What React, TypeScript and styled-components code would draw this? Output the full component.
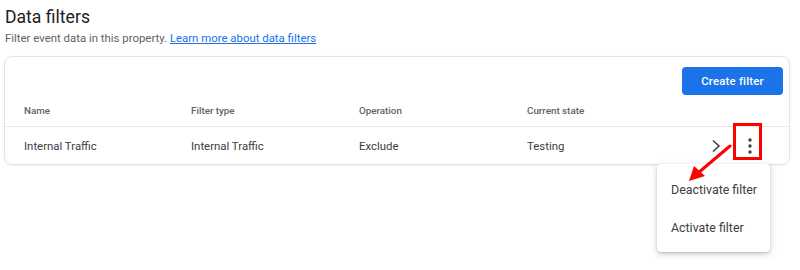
import React from 'react';
import styled, { createGlobalStyle } from 'styled-components';

const GlobalStyle = createGlobalStyle`
  body {
    margin: 0;
    background: #ffffff;
    font-family: Roboto, "Liberation Sans", Arial, sans-serif;
  }
`;

const Page = styled.div`
  width: 800px;
  height: 270px;
  padding: 4px 10px 0 4px;
  box-sizing: border-box;
  position: relative;
`;

const Title = styled.h1`
  margin: 0 0 0 1px;
  font-size: 17.6px;
  line-height: 26px;
  font-weight: 400;
  color: #202124;
`;

const Subtitle = styled.p`
  margin: 0 0 10px 1px;
  font-size: 11.4px;
  line-height: 16px;
  color: #5f6368;

  a {
    color: #1a73e8;
    text-decoration: underline;
  }
`;

const Card = styled.div`
  border: 1px solid #e3e3e3;
  border-radius: 8px;
  box-shadow: 0 1px 2px rgba(60, 64, 67, 0.08);
`;

const Toolbar = styled.div`
  display: flex;
  justify-content: flex-end;
  padding: 10px 6px 0 0;
`;

const PrimaryButton = styled.button`
  height: 28px;
  width: 101px;
  border: none;
  border-radius: 4px;
  background: #1a73e8;
  color: #ffffff;
  font-family: inherit;
  font-size: 11.4px;
  font-weight: 500;
  letter-spacing: 0.2px;
  cursor: pointer;
`;

const Row = styled.div<{ $header?: boolean }>`
  display: grid;
  grid-template-columns: 167px 168px 168px 168px 1fr;
  align-items: center;
  padding-left: 19px;
  height: ${p => (p.$header ? '31px' : '37px')};
  border-bottom: ${p => (p.$header ? '1px solid #e8e8e8' : 'none')};
  font-size: ${p => (p.$header ? '9.8px' : '11.4px')};
  font-weight: ${p => (p.$header ? 500 : 400)};
  color: ${p => (p.$header ? '#5f6368' : '#3c4043')};
`;

const Actions = styled.div`
  display: flex;
  align-items: center;
  padding-left: 13px;
  gap: 18px;
  position: relative;
`;

const IconButton = styled.span`
  display: flex;
  align-items: center;
  justify-content: center;
  width: 16px;
  height: 20px;
  color: #3c4043;
`;

const Highlight = styled.span`
  position: absolute;
  left: 38px;
  top: -13px;
  width: 29px;
  height: 37px;
  box-sizing: border-box;
  border: 3px solid #f00;
`;

const Menu = styled.div`
  position: absolute;
  left: 657px;
  top: 164px;
  width: 113px;
  padding: 6px 0;
  background: #ffffff;
  border-radius: 4px;
  box-shadow: 0 2px 6px rgba(60, 64, 67, 0.25), 0 1px 2px rgba(60, 64, 67, 0.2);
`;

const MenuItem = styled.div`
  padding: 0 14px;
  height: 38px;
  display: flex;
  align-items: center;
  font-size: 12.4px;
  color: #3c4043;
  white-space: nowrap;
`;

const Arrow = styled.svg`
  position: absolute;
  left: 684px;
  top: 142px;
`;

const columns = ['Name', 'Filter type', 'Operation', 'Current state'];

const App: React.FC = () => {
  return (
    <Page>
      <GlobalStyle />
      <Title>Data filters</Title>
      <Subtitle>
        Filter event data in this property. <a href="#">Learn more about data filters</a>
      </Subtitle>

      <Card>
        <Toolbar>
          <PrimaryButton>Create filter</PrimaryButton>
        </Toolbar>
        <Row $header>
          {columns.map(c => (
            <div key={c}>{c}</div>
          ))}
          <div />
        </Row>
        <Row>
          <div>Internal Traffic</div>
          <div>Internal Traffic</div>
          <div>Exclude</div>
          <div>Testing</div>
          <Actions>
            <IconButton>
              <svg width="10" height="14" viewBox="0 0 10 14">
                <path d="M2 1.5 L8 7 L2 12.5" fill="none" stroke="#3c4043" strokeWidth="1.6" />
              </svg>
            </IconButton>
            <IconButton>
              <svg width="6" height="16" viewBox="0 0 6 16">
                <circle cx="3" cy="2" r="1.7" fill="#3c4043" />
                <circle cx="3" cy="8" r="1.7" fill="#3c4043" />
                <circle cx="3" cy="14" r="1.7" fill="#3c4043" />
              </svg>
            </IconButton>
            <Highlight />
          </Actions>
        </Row>
      </Card>

      <Menu>
        <MenuItem>Deactivate filter</MenuItem>
        <MenuItem>Activate filter</MenuItem>
      </Menu>

      <Arrow width="50" height="42" viewBox="0 0 50 42">
        <line x1="46" y1="4" x2="14" y2="31" stroke="#f00" strokeWidth="3" strokeLinecap="round" />
        <polygon points="5,39 10,24 21,34" fill="#f00" />
      </Arrow>
    </Page>
  );
};

export default App;
